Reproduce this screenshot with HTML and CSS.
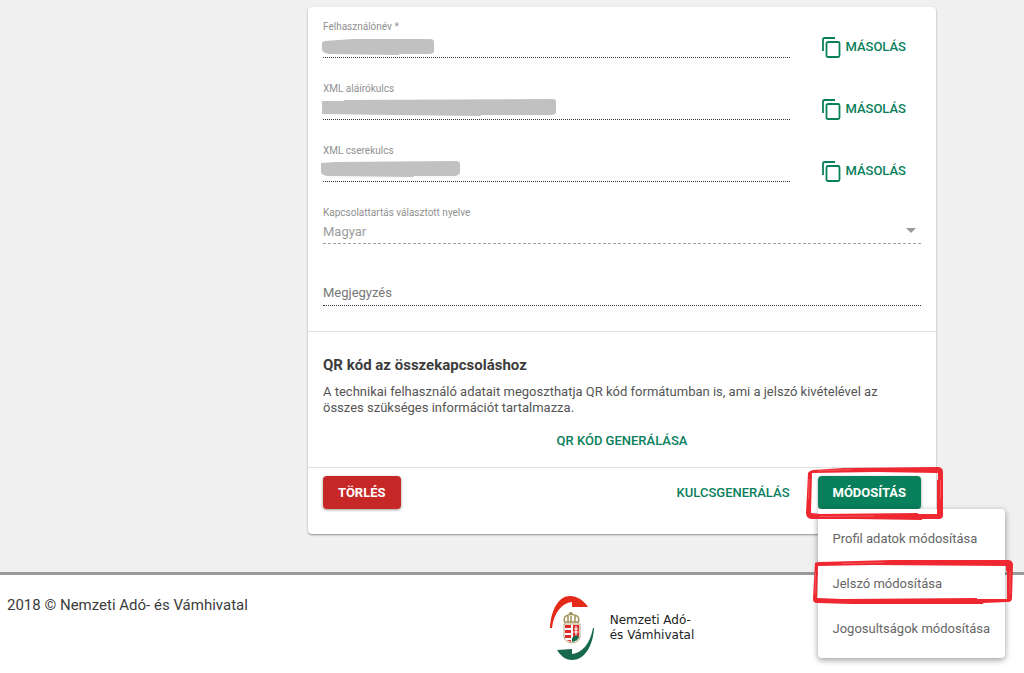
FILE: index.html
```
<!DOCTYPE html>
<html lang="hu">
    <head>
        <meta charset="utf-8">
        <meta name="viewport" content="width=device-width, initial-scale=1">
        <title>Technikai felhasználó</title>
        <link rel="stylesheet" href="styles.css">
    </head>
    <body>
        <svg class="defs" aria-hidden="true">
            <symbol id="copy" viewBox="0 0 20 22">
                <path d="M2 15V3.500Q2 2 3.500 2H14" fill="none" stroke="currentColor" stroke-width="1.8"/>
                <rect x="5.500" y="6" width="13" height="15" rx="1.500" fill="none" stroke="currentColor" stroke-width="1.8"/>
            </symbol>
        </svg>
        <main class="layout">
            <section class="card">
                <form class="fields">
                    <div class="row">
                        <div class="field">
                            <label for="username">Felhasználónév *</label>
                            <input type="text" id="username" name="username">
                            <svg class="redacted" width="240" height="20" aria-hidden="true"><path fill="#c1c1c1" d="M1 6Q2 4 4 4L32 2L109 2Q113 2 113 5V14Q113 17 108 17H78V18L8 17Q0 16 1 10Z"/></svg>
                        </div>
                        <button type="button" class="link copy"><svg width="20" height="22"><use href="#copy"/></svg>MÁSOLÁS</button>
                    </div>
                    <div class="row">
                        <div class="field">
                            <label for="signkey">XML aláírókulcs</label>
                            <input type="text" id="signkey" name="signkey">
                            <svg class="redacted" width="240" height="20" aria-hidden="true"><path fill="#c1c1c1" d="M1 2H22L24 1L232 0Q235 0 235 3V13Q235 16 230 16H160V17L70 16L1 15Z"/></svg>
                        </div>
                        <button type="button" class="link copy"><svg width="20" height="22"><use href="#copy"/></svg>MÁSOLÁS</button>
                    </div>
                    <div class="row">
                        <div class="field">
                            <label for="exchangekey">XML cserekulcs</label>
                            <input type="text" id="exchangekey" name="exchangekey">
                            <svg class="redacted" width="240" height="20" aria-hidden="true"><path fill="#c1c1c1" d="M0 2L14 1L135 0Q139 0 139 3V11Q139 14 134 15H93L92 16L7 15Q0 14 0 11Z"/></svg>
                        </div>
                        <button type="button" class="link copy"><svg width="20" height="22"><use href="#copy"/></svg>MÁSOLÁS</button>
                    </div>
                    <div class="field">
                        <label for="language">Kapcsolattartás választott nyelve</label>
                        <select id="language" name="language" disabled>
                            <option>Magyar</option>
                        </select>
                        <svg class="arrow" width="10" height="5" aria-hidden="true"><path fill="#9b9b9b" d="M0 0H10L5 5Z"/></svg>
                    </div>
                    <div class="field floating">
                        <label for="note">Megjegyzés</label>
                        <input type="text" id="note" name="note">
                    </div>
                </form>
                <div class="qr">
                    <h2>QR kód az összekapcsoláshoz</h2>
                    <p>A technikai felhasználó adatait megoszthatja QR kód formátumban is, ami a jelszó kivételével az összes szükséges információt tartalmazza.</p>
                    <button type="button" class="link">QR KÓD GENERÁLÁSA</button>
                </div>
                <div class="actions">
                    <button type="button" class="btn danger">TÖRLÉS</button>
                    <button type="button" class="link keygen">KULCSGENERÁLÁS</button>
                    <div class="dropdown">
                        <button type="button" class="btn primary">MÓDOSÍTÁS</button>
                        <ul class="menu">
                            <li><button type="button">Profil adatok módosítása</button></li>
                            <li>
                                <button type="button">Jelszó módosítása</button>
                                <svg class="mark mark-item" viewBox="0 0 201 44" aria-hidden="true">
                                    <path fill="#ee2731" fill-rule="evenodd" d="M3 3Q4 2 8 2L80 0H197Q201 1 201 5L200 38Q200 42 196 42L171 43V44H40L5 43Q1 43 1 39L2 20ZM6 6L5 38L30 39L165 38V39H195V11H194V6L60 5Z"/>
                                    <path stroke="#f4555c" fill="none" d="M30 3.500L72 2.500M3.500 12L3 34M198 12V34"/>
                                </svg>
                            </li>
                            <li><button type="button">Jogosultságok módosítása</button></li>
                        </ul>
                        <svg class="mark mark-button" viewBox="0 0 137 52" aria-hidden="true">
                            <path fill="#ee2731" fill-rule="evenodd" d="M2 6Q3 4 7 3L38 1L133 0Q137 1 137 5V48Q137 52 133 52L116 52V53L50 52L5 52Q0 51 0 46L1 27ZM6 6L5 46L14 47L112 46V47H131V13H132V6L70 5Z"/>
                            <path stroke="#f4555c" fill="none" d="M12 4L46 2.500M3 12L2.500 32M14 49.500L68 49M134.500 13V32"/>
                        </svg>
                    </div>
                </div>
            </section>
        </main>
        <footer class="layout">
            <p class="copyright">2018 © Nemzeti Adó- és Vámhivatal</p>
            <div class="brand">
                <svg width="44" height="64" viewBox="0 0 44 64" role="img" aria-label="NAV">
                    <path fill="#e52a1a" d="M0 32C1 13 9 0 20 0C28 0 34 5 38 11L22 11V6C12 7 4 16 2 32Z"/>
                    <path fill="#17694b" d="M44 32C43 51 34 64 22 64C15 64 10 59 7 54L22 53V58C32 57 40 48 43 32Z"/>
                    <path fill="none" stroke="#a3905a" stroke-width="1.500" d="M15 27Q13 22 16 20Q21 17 27 20Q30 22 28 27M15 26H28M18 26V20M25 26V20M21 16V19M19 17L23 18M21 20V26"/>
                    <path fill="#fff" stroke="#b5a377" d="M14 28H30V41Q29 46 22 47Q15 46 14 41Z"/>
                    <path fill="#dc2b2a" d="M15 29H21V32H15ZM15 34H21V37H15ZM15 39H21V42H15ZM17 44H21V46ZM23 29H29V41H23Z"/>
                    <path fill="none" stroke="#fff" stroke-width="1.200" d="M26 30V40M24 33H28M23.500 36H28.500"/>
                    <path fill="#17694b" d="M22 42L26 39L29 41Q28 45 22 46Z"/>
                </svg>
                <span>Nemzeti Adó-<br>és Vámhivatal</span>
            </div>
        </footer>
    </body>
</html>
```
FILE: styles.css
```
* {box-sizing: border-box;}
body {margin: 0; min-height: 100vh; display: flex; flex-direction: column; background-color: #f0f0f0; color: #3c3c3c; font-family: Roboto, Arial, sans-serif; font-size: 13px;}
button, input, select {font: inherit; color: inherit; border: none; background: none; padding: 0; margin: 0;}
button {cursor: pointer;}
.defs {position: absolute; width: 0; height: 0;}
.layout {display: grid; grid-template-columns: 308px minmax(0, 1fr) 88px;}

.card {
    grid-column: 2;
    margin: 7px 0 38px;
    background-color: #fff;
    border-radius: 4px;
    box-shadow: 0 1px 2px rgba(0, 0, 0, 0.4);
}

/* form */
.fields {padding: 13px 15px 25px; display: flex; flex-direction: column; gap: 24px;}
.row {display: grid; grid-template-columns: minmax(0, 1fr) 131px;}
.field {position: relative; display: flex; flex-direction: column;}
.field label {font-size: 10px; line-height: 14px; color: #919191;}
.field input, .field select {
    width: 100%;
    height: 24px;
    border-bottom: 1px dotted #333;
    border-radius: 0;
    outline: none;
    appearance: none;
}
.field select {border-bottom: 1px dashed #a0a0a0; color: #9b9b9b; opacity: 1;}
.floating {padding-top: 14px;}
.field.floating label {position: absolute; left: 0; bottom: 6px; font-size: 13px; color: #777;}
.redacted {position: absolute; left: -2px; top: 17px; pointer-events: none;}
.arrow {position: absolute; right: 5px; bottom: 11px; pointer-events: none;}

.link {color: #08805b; font-size: 13px; font-weight: 500; line-height: 20px;}
.copy {display: flex; align-items: center; gap: 4px; justify-self: end; align-self: end; margin-right: 15px;}

/* qr */
.qr {display: flex; flex-direction: column; padding: 24px 15px 16px; border-top: 1px solid #e0e0e0; border-bottom: 1px solid #e0e0e0;}
.qr h2 {margin: 0; font-size: 15px; font-weight: 700; line-height: 18px;}
.qr p {margin: 10px 0 15px; line-height: 16px; color: #555;}
.qr .link {align-self: center;}

/* buttons */
.actions {display: flex; align-items: center; padding: 8px 15px 25px;}
.btn {height: 33px; padding: 0 15px; border-radius: 4px; color: #fff; font-size: 13px; font-weight: 700; box-shadow: 0 1px 3px rgba(0, 0, 0, 0.4);}
.danger {background-color: #c62828;}
.primary {background-color: #08805b; display: block;}
.keygen {margin-left: auto; margin-right: 28px;}

.dropdown {position: relative;}
.menu {
    position: absolute;
    top: 100%;
    left: 0;
    margin: 0;
    padding: 7px 0;
    list-style: none;
    background-color: #fff;
    border-radius: 0 4px 4px 4px;
    box-shadow: 0 2px 6px rgba(0, 0, 0, 0.4);
}
.menu li {position: relative;}
.menu button {height: 45px; width: 100%; padding: 0 15px; text-align: left; white-space: nowrap; color: #666;}
.mark {position: absolute; pointer-events: none; overflow: visible;}
.mark-button {left: -12px; top: -9px; width: 137px; height: 52px;}
.mark-item {left: -6px; top: -1px; width: 201px; height: 44px;}

footer {flex: 1; border-top: 3px solid #9a9a9a; background-color: #fff; padding: 21px 0 13px;}
.copyright {margin: 0; padding-left: 7px; font-size: 15px; line-height: 18px;}
.brand {display: flex; align-items: center; gap: 16px; justify-self: center; align-self: start; font-family: "DejaVu Sans", Verdana, sans-serif; font-size: 12px; line-height: 15px; color: #222;}
```
